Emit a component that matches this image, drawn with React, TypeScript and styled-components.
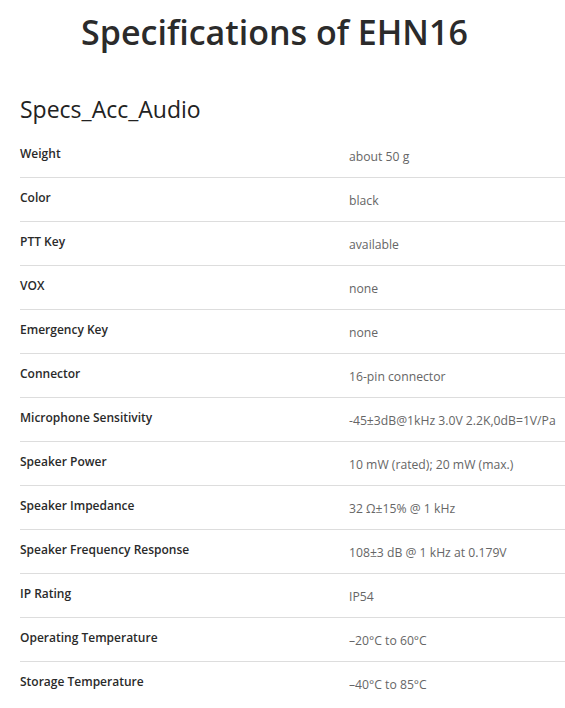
import React from "react";
import styled, { createGlobalStyle } from "styled-components";

const Global = createGlobalStyle`
  html, body { margin: 0; padding: 0; background: #fff; }
  body { font-family: "Open Sans", "Liberation Sans", sans-serif; color: #333; }
`;

const Page = styled.div`
  width: 565px;
  overflow: hidden;
  padding: 0 0 0 20px;
  box-sizing: border-box;
`;

const Title = styled.h1`
  margin: 0;
  padding: 6px 36px 0 0;
  text-align: center;
  font-size: 34px;
  line-height: 52px;
  font-weight: 600;
  color: #2b2b2b;
`;

const Subtitle = styled.h2`
  margin: 33px 0 7px;
  font-size: 23px;
  line-height: 36px;
  font-weight: 400;
  color: #222;
  height: 36px;
`;

const Table = styled.div`
  display: grid;
  grid-template-columns: 329px 1fr;
`;

const Row = styled.div<{ $last?: boolean }>`
  display: contents;
  & > div {
    height: 44px;
    box-sizing: border-box;
    border-bottom: ${(p) => (p.$last ? "none" : "1px solid #ddd")};
  }
`;

const Label = styled.div`
  font-size: 12px;
  font-weight: 570;
  color: #2a2a2a;
  padding-top: 11px;
  white-space: nowrap;
`;

const Value = styled.div`
  font-size: 12.2px;
  font-weight: 400;
  color: #666;
  padding-top: 14px;
  white-space: nowrap;
`;

const specs: [string, string][] = [
  ["Weight", "about 50 g"],
  ["Color", "black"],
  ["PTT Key", "available"],
  ["VOX", "none"],
  ["Emergency Key", "none"],
  ["Connector", "16-pin connector"],
  ["Microphone Sensitivity", "-45±3dB@1kHz 3.0V 2.2K,0dB=1V/Pa"],
  ["Speaker Power", "10 mW (rated); 20 mW (max.)"],
  ["Speaker Impedance", "32 Ω±15% @ 1 kHz"],
  ["Speaker Frequency Response", "108±3 dB @ 1 kHz at 0.179V"],
  ["IP Rating", "IP54"],
  ["Operating Temperature", "–20°C to 60°C"],
  ["Storage Temperature", "–40°C to 85°C"],
];

export default function App() {
  return (
    <Page>
      <Global />
      <Title>Specifications of EHN16</Title>
      <Subtitle>Specs_Acc_Audio</Subtitle>
      <Table>
        {specs.map(([k, v], i) => (
          <Row key={k} $last={i === specs.length - 1}>
            <Label>{k}</Label>
            <Value>{v}</Value>
          </Row>
        ))}
      </Table>
    </Page>
  );
}
